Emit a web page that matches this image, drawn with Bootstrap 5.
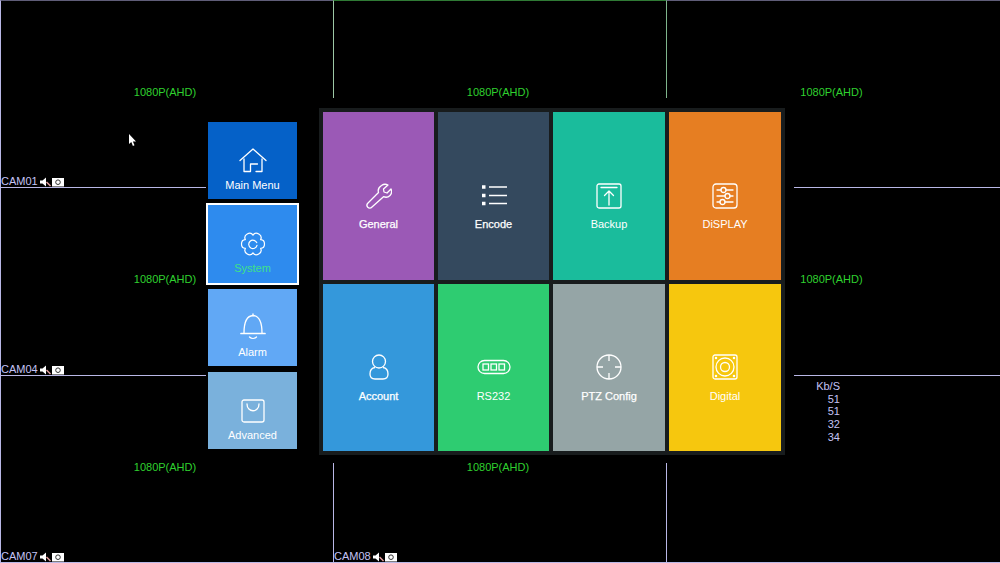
<!DOCTYPE html>
<html lang="en">
<head>
    <meta charset="UTF-8">
    <meta name="viewport" content="width=device-width, initial-scale=1">
    <link href="https://cdn.jsdelivr.net/npm/bootstrap@5.3.3/dist/css/bootstrap.min.css" rel="stylesheet">
    <script src="https://cdn.jsdelivr.net/npm/bootstrap@5.3.3/dist/js/bootstrap.bundle.min.js"></script>
    <title>DVR Main Menu</title>
    <style>
        html, body { height: 563px; overflow: hidden; background: #000; }
        body { font-family: "Liberation Sans", Arial, sans-serif; position: relative; width: 1000px; }

        /* camera view behind the menu */
        .cam-wall { display: grid; grid-template-columns: 333px 333px 334px; grid-template-rows: 188px 188px 187px; height: 563px; }
        .cam-cell { position: relative; border-left: 1px solid #b9b7e6; border-bottom: 1px solid #b9b7e6; }
        .cam-top { border-top: 1px solid #5f5d78; }
        .cam-cell.active { border-left-color: #9cc7a5; border-top-color: #2f7a35; }
        .cam-cell.active-right { border-left-color: #7fb58c; }
        .cam-res { color: #2fd12f; font-size: 11px; line-height: 13px; margin-bottom: 4px; margin-right: 4px; }
        .cam-name { position: absolute; left: 0; bottom: -1px; color: #c4c3f5; font-size: 11px; line-height: 13px; display: flex; align-items: center; gap: 2px; }
        .cam-name svg { display: block; }

        .menu-mask { position: absolute; left: 206px; top: 98px; width: 588px; height: 365px; background: #000; }
        .side-menu { position: absolute; left: 208px; top: 122px; width: 89px; display: flex; flex-direction: column; }
        .side-tile { height: 77px; display: flex; flex-direction: column; align-items: center; justify-content: flex-end; color: #fff; font-size: 11px; line-height: 13px; padding-bottom: 7px; margin-bottom: 6px; }
        .side-tile svg { margin-bottom: 5px; }
        .side-tile.selected { color: #3ee08a; outline: 2px solid #fff; height: 78px; padding-bottom: 8px; }
        .tile-home { background: #0561c8; }
        .tile-system { background: #2e8bee; }
        .tile-alarm { background: #61a8f5; }
        .tile-advanced { background: #7ab1dc; margin-bottom: 0; }
        .tile-advanced svg { margin-bottom: 6px; }

        .main-panel { position: absolute; left: 319px; top: 108px; width: 466px; height: 347px; background: #181c1d; padding: 4px; display: grid; grid-template-columns: 111px 111px 112px 112px; grid-template-rows: repeat(2, 1fr); gap: 4px; }
        .main-tile { display: flex; flex-direction: column; align-items: center; color: #fff; font-size: 11px; line-height: 13px; -webkit-text-stroke: 0.25px #fff; }
        .main-tile.plain-label { -webkit-text-stroke: 0; }
        .main-tile svg { display: block; }
        .row-top svg { margin-top: 71px; margin-bottom: 9px; }
        .row-bottom svg { margin-top: 70px; margin-bottom: 10px; }
        .c-general { background: #9b59b6; }
        .c-encode { background: #34495e; }
        .c-backup { background: #1abc9c; }
        .c-display { background: #e67e22; }
        .c-account { background: #3498db; }
        .c-rs232 { background: #2ecc71; }
        .c-ptz { background: #95a5a6; }
        .c-digital { background: #f6c70e; }

        .kbs-list { position: absolute; left: 806px; top: 380px; width: 34px; text-align: right; color: #c4c3f5; font-size: 11px; line-height: 12.7px; }
        .mouse-arrow { position: absolute; left: 128px; top: 134px; }
    </style>
</head>
<body>

<div class="cam-wall">
    <div class="cam-cell cam-top d-flex align-items-center justify-content-center"><span class="cam-res">1080P(AHD)</span><span class="cam-name">CAM01 <svg width="24" height="10" viewBox="0 0 24 10"><path d="M0 3.5h2.5L6 .5v9L2.5 6.5H0z" fill="#fff"/><path d="M6.500 5l4 4" stroke="#e8a0a0" stroke-width="1.500"/><rect x="12" y="1" width="12" height="8.500" fill="#fff"/><circle cx="18" cy="5.200" r="2.300" fill="none" stroke="#333" stroke-width="1"/></svg></span></div>
    <div class="cam-cell cam-top active d-flex align-items-center justify-content-center"><span class="cam-res">1080P(AHD)</span></div>
    <div class="cam-cell cam-top active-right d-flex align-items-center justify-content-center"><span class="cam-res">1080P(AHD)</span></div>

    <div class="cam-cell d-flex align-items-center justify-content-center"><span class="cam-res">1080P(AHD)</span><span class="cam-name">CAM04 <svg width="24" height="10" viewBox="0 0 24 10"><path d="M0 3.5h2.5L6 .5v9L2.5 6.5H0z" fill="#fff"/><path d="M6.500 5l4 4" stroke="#e8a0a0" stroke-width="1.500"/><rect x="12" y="1" width="12" height="8.500" fill="#fff"/><circle cx="18" cy="5.200" r="2.300" fill="none" stroke="#333" stroke-width="1"/></svg></span></div>
    <div class="cam-cell d-flex align-items-center justify-content-center"></div>
    <div class="cam-cell d-flex align-items-center justify-content-center"><span class="cam-res">1080P(AHD)</span></div>

    <div class="cam-cell d-flex align-items-center justify-content-center"><span class="cam-res">1080P(AHD)</span><span class="cam-name">CAM07 <svg width="24" height="10" viewBox="0 0 24 10"><path d="M0 3.5h2.5L6 .5v9L2.5 6.5H0z" fill="#fff"/><path d="M6.500 5l4 4" stroke="#e8a0a0" stroke-width="1.500"/><rect x="12" y="1" width="12" height="8.500" fill="#fff"/><circle cx="18" cy="5.200" r="2.300" fill="none" stroke="#333" stroke-width="1"/></svg></span></div>
    <div class="cam-cell d-flex align-items-center justify-content-center"><span class="cam-res">1080P(AHD)</span><span class="cam-name">CAM08 <svg width="24" height="10" viewBox="0 0 24 10"><path d="M0 3.5h2.5L6 .5v9L2.5 6.5H0z" fill="#fff"/><path d="M6.500 5l4 4" stroke="#e8a0a0" stroke-width="1.500"/><rect x="12" y="1" width="12" height="8.500" fill="#fff"/><circle cx="18" cy="5.200" r="2.300" fill="none" stroke="#333" stroke-width="1"/></svg></span></div>
    <div class="cam-cell d-flex align-items-center justify-content-center"></div>
</div>

<svg class="mouse-arrow" width="9" height="14" viewBox="0 0 9 14"><path d="M1 0v10l2.300-2 1.600 4 1.600-.7-1.600-3.800H8z" fill="#fff"/></svg>

<div class="menu-mask"></div>

<!-- left menu -->
<div class="side-menu">
    <div class="side-tile tile-home">
        <svg width="28" height="26" viewBox="0 0 28 26" fill="none" stroke="#fff" stroke-width="1.300" stroke-linecap="round" stroke-linejoin="round"><path d="M1 12.500 14 1l13 11.500"/><path d="M5 11v12.500h6.500V16h7M23 11v12.500h-6"/></svg>
        Main Menu
    </div>
    <div class="side-tile tile-system selected">
        <svg width="26" height="26" viewBox="-1 -1 28 28" fill="none" stroke="#fff" stroke-width="1.300" stroke-linecap="round" stroke-linejoin="round"><path d="M13 3.500C16.010-1.180 23.780 3.300 21.230 8.250 26.790 8.520 26.790 17.480 21.230 17.750 23.780 22.700 16.010 27.180 13 22.500 9.990 27.180 2.220 22.700 4.770 17.750-.79 17.480-.79 8.520 4.770 8.250 2.220 3.300 9.990-1.180 13 3.500z"/><path d="M17 11.500a4.500 4.500 0 1 0 .3 3"/></svg>
        System
    </div>
    <div class="side-tile tile-alarm">
        <svg width="26" height="28" viewBox="0 0 26 28" fill="none" stroke="#fff" stroke-width="1.300" stroke-linecap="round" stroke-linejoin="round"><path d="M1 20.500h24" stroke-width="1.700"/><path d="M4 20C4 13 5 3 13 2.500 21 3 22 13 22 20"/><path d="M13 1v1.500"/><path d="M9.500 24c2 1.800 5 1.800 7 0"/></svg>
        Alarm
    </div>
    <div class="side-tile tile-advanced">
        <svg width="24" height="24" viewBox="0 0 24 24" fill="none" stroke="#fff" stroke-width="1.300" stroke-linecap="round" stroke-linejoin="round"><rect x="1" y="1" width="22" height="22" rx="2"/><path d="M6 5c0 9 12 9 12 0"/></svg>
        Advanced
    </div>
</div>

<!-- main grid -->
<div class="main-panel">
    <div class="main-tile row-top c-general">
        <svg width="26" height="26" viewBox="0 0 26 26" fill="none" stroke="#fff" stroke-width="1.300" stroke-linejoin="round" stroke-linecap="round"><path d="M15.500 2.500c2-1.500 4.500-1.500 6.500-.5l-4.500 4 .5 3 3 1 4-4c1 2.500.5 5-1 6.500s-4 2.200-6.500 1.200L6 24c-1.500 1.500-3.200 1.200-4.200.2S.5 21.500 2 20l10.500-10.500c-.8-2.500 0-5 3-7z"/></svg>
        General
    </div>
    <div class="main-tile row-top c-encode">
        <svg width="26" height="26" viewBox="0 0 26 26" fill="none" stroke="#fff" stroke-width="1.300"><path d="M8 4h18M8 12.500h18M8 20.500h18"/><path d="M1 2.300h3.500v3.500H1zM1 10.800h3.500v3.500H1zM1 18.800h3.500v3.500H1z" fill="#fff" stroke="none"/></svg>
        Encode
    </div>
    <div class="main-tile row-top plain-label c-backup">
        <svg width="26" height="26" viewBox="0 0 26 26" fill="none" stroke="#fff" stroke-width="1.300" stroke-linecap="round" stroke-linejoin="round"><rect x="1" y="1" width="24" height="24" rx="2"/><path d="M5 4.500h16M13 22V8M8.500 12.500 13 8l4.500 4.500"/></svg>
        Backup
    </div>
    <div class="main-tile row-top plain-label c-display">
        <svg width="26" height="26" viewBox="0 0 26 26" fill="none" stroke="#fff" stroke-width="1.300" stroke-linecap="round"><rect x="1" y="1" width="24" height="24" rx="3"/><path d="M5 7h4M14 7h7M5 13h8M18 13h3M5 19h3M13 19h8"/><circle cx="11.500" cy="7" r="2.500"/><circle cx="15.500" cy="13" r="2.500"/><circle cx="10.500" cy="19" r="2.500"/></svg>
        DiSPLAY
    </div>

    <div class="main-tile row-bottom c-account">
        <svg width="20" height="26" viewBox="0 0 20 26" fill="none" stroke="#fff" stroke-width="1.300"><ellipse cx="10" cy="7.500" rx="6.500" ry="6.500"/><path d="M6 13.500C2 14 1 17 1 20c0 3 2 5 5 5h8c3 0 5-2 5-5 0-3-1-6-5-6.500"/></svg>
        Account
    </div>
    <div class="main-tile row-bottom plain-label c-rs232">
        <svg width="34" height="26" viewBox="0 0 34 26" fill="none" stroke="#fff" stroke-width="1.300"><rect x="1" y="6.500" width="32" height="13" rx="6.500"/><rect x="6" y="10" width="5.500" height="6"/><rect x="14" y="10" width="5.500" height="6"/><rect x="22" y="10" width="5.500" height="6"/></svg>
        RS232
    </div>
    <div class="main-tile row-bottom c-ptz">
        <svg width="26" height="26" viewBox="0 0 26 26" fill="none" stroke="#fff" stroke-width="1.300"><circle cx="13" cy="13" r="12"/><path d="M13 1v6M13 19v6M1 13h6M19 13h6"/></svg>
        PTZ Config
    </div>
    <div class="main-tile row-bottom plain-label c-digital">
        <svg width="26" height="26" viewBox="0 0 26 26" fill="none" stroke="#fff" stroke-width="1.300"><rect x="1" y="1" width="24" height="24" rx="2"/><circle cx="13" cy="13" r="9"/><circle cx="13" cy="13" r="4.500"/><circle cx="4" cy="4" r=".6"/><circle cx="22" cy="4" r=".6"/><circle cx="4" cy="22" r=".6"/><circle cx="22" cy="22" r=".6"/></svg>
        Digital
    </div>
</div>

<div class="kbs-list">
    <div>Kb/S</div>
    <div>51</div>
    <div>51</div>
    <div>32</div>
    <div>34</div>
</div>

</body>
</html>
